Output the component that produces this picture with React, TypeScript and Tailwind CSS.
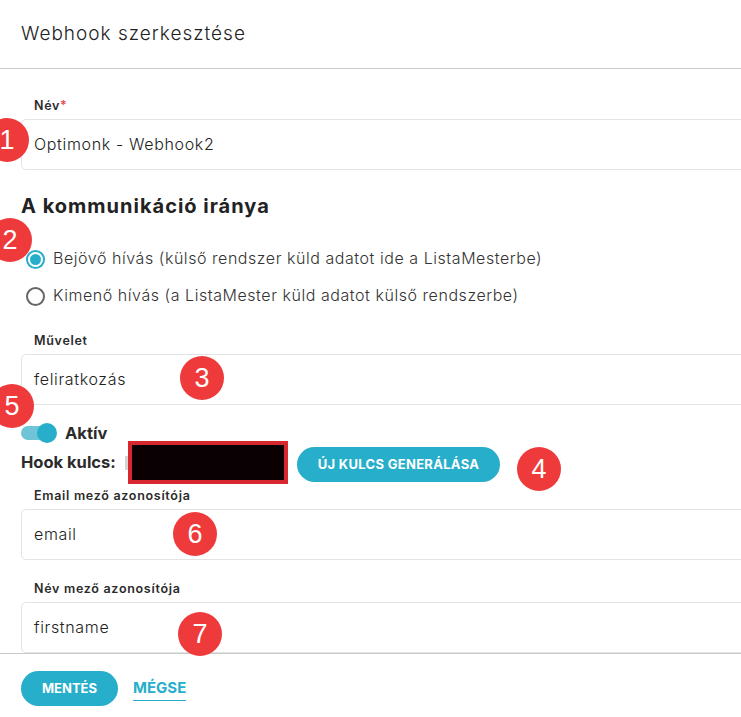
import React from 'react';

const font = "font-['Inter','Open_Sans',sans-serif]";

const Badge = ({ n, className }: { n: number; className: string }) => (
  <span className={`absolute z-10 flex h-11 w-11 items-center justify-center rounded-full bg-[#ee3a3b] font-['Liberation_Sans',sans-serif] text-[27px] leading-none text-white ${className}`}>
    {n}
  </span>
);

const Field = ({ label, value, required, className = '' }: { label: string; value: string; required?: boolean; className?: string }) => (
  <div className={className}>
    <label className="block h-[14px] pl-[13px] text-[12.5px] leading-[16px] font-semibold tracking-[0.7px] text-[#2b2b2b]">
      {label}
      {required && <span className="text-[#e5484d]">*</span>}
    </label>
    <div className="mt-[7px] -mr-3 flex h-[51px] items-center rounded-[5px] border border-[#e3e3e3] bg-white pb-[2px] pl-3 text-[16px] font-light tracking-[0.65px] text-[#222]">
      {value}
    </div>
  </div>
);

const Radio = ({ checked, label }: { checked?: boolean; label: string }) => (
  <div className="flex h-[19px] items-center gap-[8px] pl-[5px]">
    <span className={`flex h-[19px] w-[19px] shrink-0 items-center justify-center rounded-full border-2 ${checked ? 'border-[#27aecb]' : 'border-[#666]'}`}>
      {checked && <span className="h-[11px] w-[11px] rounded-full bg-[#27aecb]" />}
    </span>
    <span className="pb-[3px] text-[16px] font-light tracking-[0.55px] whitespace-nowrap text-[#333]">{label}</span>
  </div>
);

export default function App() {
  return (
    <div className={`relative flex h-[717px] w-[741px] flex-col overflow-hidden bg-white ${font}`}>
      <header className="flex h-[69px] shrink-0 items-center border-b border-[#c9c9c9] pl-[21px] text-[19px] font-light tracking-[1px] text-[#222]">
        Webhook szerkesztése
      </header>

      <main className="h-[584px] shrink-0 overflow-hidden pt-[29px] pl-[21px]">
        <Field label="Név" value="Optimonk - Webhook2" required />

        <h2 className="mt-[24px] text-[20px] leading-[24px] font-bold tracking-[1px] text-[#222]">A kommunikáció iránya</h2>

        <div className="mt-[32px] flex flex-col gap-[18px]">
          <Radio checked label="Bejövő hívás (külső rendszer küld adatot ide a ListaMesterbe)" />
          <Radio label="Kimenő hívás (a ListaMester küld adatot külső rendszerbe)" />
        </div>

        <Field label="Művelet" value="feliratkozás" className="mt-[27px]" />

        <div className="mt-[17px] flex h-[22px] items-center">
          <span className="relative h-[14px] w-[34px] rounded-full bg-[#6fc4d8]">
            <span className="absolute top-[-3px] right-[-2px] h-5 w-5 rounded-full bg-[#27aecb]" />
          </span>
          <span className="ml-[10px] text-[16.5px] font-bold text-[#2b2b2b]">Aktív</span>
        </div>

        <div className="-mt-[3px] flex h-[43px] items-center">
          <span className="w-[104px] shrink-0 text-[16.5px] font-bold whitespace-nowrap text-[#2b2b2b]">Hook kulcs:</span>
          <span className="h-[14px] w-[3px] shrink-0 bg-[#d5d5d5]" />
          <span className="h-[43px] w-[160px] shrink-0 border-[4px] border-[#d8282f] bg-[#0a0003]" />
          <button className="mt-[4px] ml-[9px] h-[35px] w-[203px] shrink-0 rounded-full bg-[#27aecb] text-[13px] font-bold tracking-[0.3px] text-white">
            ÚJ KULCS GENERÁLÁSA
          </button>
        </div>

        <Field label="Email mező azonosítója" value="email" className="mt-[4px]" />
        <Field label="Név mező azonosítója" value="firstname" className="mt-[21px]" />
      </main>

      <footer className="flex flex-1 items-start border-t border-[#c9c9c9] pt-[17px] pl-[21px]">
        <button className="h-[35px] w-[97px] rounded-full bg-[#27aecb] text-[13px] font-bold text-white">
          MENTÉS
        </button>
        <a className="mt-[7px] ml-[15px] border-b border-[#27aecb] pb-[2px] text-[15px] leading-[20px] font-bold text-[#27aecb]">
          MÉGSE
        </a>
      </footer>

      <Badge n={1} className="top-[118px] -left-[15px]" />
      <Badge n={2} className="top-[218px] -left-[12px]" />
      <Badge n={3} className="top-[356px] left-[180px]" />
      <Badge n={4} className="top-[447px] left-[517px]" />
      <Badge n={5} className="top-[384px] -left-[10px]" />
      <Badge n={6} className="top-[512px] left-[173px]" />
      <Badge n={7} className="top-[612px] left-[178px]" />
    </div>
  );
}
